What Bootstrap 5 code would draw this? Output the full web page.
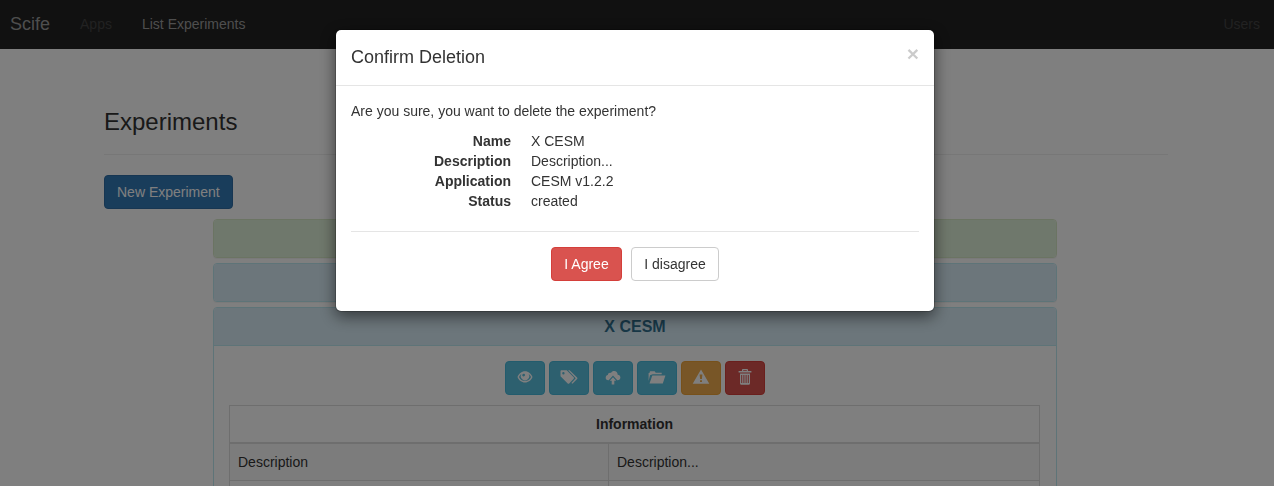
<!DOCTYPE html>
<html lang="en">
<head>
<meta charset="utf-8">
<title>Scife - Experiments</title>
<link rel="stylesheet" href="https://cdn.jsdelivr.net/npm/bootstrap@5.3.0/dist/css/bootstrap.min.css">
<script src="https://cdn.jsdelivr.net/npm/bootstrap@5.3.0/dist/js/bootstrap.bundle.min.js"></script>
<style>
body{font-family:"Liberation Sans",Arial,sans-serif;font-size:14px;line-height:20px;color:#333;overflow:hidden;height:486px}
.topbar{height:49px;background:#222;padding:0 14px 2px 10px}
.topbar .navbar-brand{font-size:18px;line-height:20px;color:#9d9d9d;margin-right:30px;padding:0}
.topbar .nav-link{color:#9d9d9d;padding:0;margin-right:30px}
.topbar .nav-link.disabled{color:#444}
.page-area{width:1064px;height:437px;overflow:hidden;margin-left:104px;padding-top:60px}
h3{font-size:24px;line-height:26px;font-weight:400;margin:0;color:inherit}
.rule{border-top:1px solid #eee;margin:19px 0 20px}
.btn{--bs-btn-font-size:14px;--bs-btn-line-height:20px;--bs-btn-padding-y:6px;--bs-btn-padding-x:12px;--bs-btn-border-radius:4px}
.btn-primary{--bs-btn-bg:#337ab7;--bs-btn-border-color:#2e6da4}
.btn-info{--bs-btn-bg:#5bc0de;--bs-btn-border-color:#46b8da}
.btn-warning{--bs-btn-bg:#f0ad4e;--bs-btn-border-color:#eea236}
.btn-danger{--bs-btn-bg:#d9534f;--bs-btn-border-color:#d43f3a}
.btn-default{--bs-btn-bg:#fff;--bs-btn-border-color:#ccc;--bs-btn-color:#333}
.panels{width:844px;margin:10px 0 0 109px;gap:5px}
.panels .card{border-radius:4px;border-color:#bce8f1;box-shadow:0 1px 1px rgba(0,0,0,.05);color:inherit}
.panels .card.done{border-color:#d6e9c6}
.panels .card-header{height:37px;padding:0;line-height:37px;font-size:16px;font-weight:700;text-align:center;background:#d9edf7;color:#31708f;border:0;border-radius:3px}
.panels .done .card-header{background:#dff0d8}
.panels .opened .card-header{height:38px;border-bottom:1px solid #bce8f1;border-radius:3px 3px 0 0}
.panels .card-body{padding:15px 16px 15px 15px}
.tools{gap:4px;margin-bottom:10px;padding-left:1px}
.tools .btn{width:40px;height:34px;padding:0 0 2px;display:flex;align-items:center;justify-content:center}
.tools svg{width:16px;height:16px;fill:#fff;display:block}
.tools svg.wide{width:18px}
.info-table{--bs-table-color:#333;border-color:#ddd;margin:0;table-layout:fixed;border-collapse:collapse}
.info-table>*>*>*{padding:8px;border:1px solid #ddd;line-height:20px}
.info-table .shaded{--bs-table-bg:#f9f9f9}
.info-table .wide-col{width:379px}
.info-table>thead>tr>th{border-bottom-width:2px;text-align:center}
.modal-backdrop{--bs-backdrop-opacity:.5}
.confirm{width:600px;max-width:600px;margin:29px 0 0 335px}
.confirm .modal-content{border:1px solid rgba(0,0,0,.2);border-radius:6px;background-clip:padding-box;box-shadow:0 5px 15px rgba(0,0,0,.5);color:#333}
.confirm .modal-header{height:56px;padding:0 15px;border-bottom:1px solid #e5e5e5}
.confirm .modal-title{font-size:18px;line-height:26px;font-weight:400;padding-bottom:1px}
.dismiss{border:0;background:none;padding:0;font-size:21px;line-height:21px;font-weight:700;color:#000;opacity:.2;text-shadow:0 1px 0 #fff;margin-bottom:9px}
.confirm .modal-body{padding:15px;height:225px}
.confirm p{margin:0 0 10px}
.confirm dl{display:grid;grid-template-columns:160px 1fr;column-gap:20px;margin:0 0 20px}
.confirm dt{text-align:right}.confirm dd{margin:0}
.choices{border-top:1px solid #e5e5e5;padding-top:15px;gap:9px}
.choices .btn{padding-left:0;padding-right:0}
.choices .btn-danger{width:71px}
.choices .btn-default{width:88px}
</style>
</head>
<body class="modal-open">
<nav class="topbar d-flex align-items-center">
  <a class="navbar-brand" href="#">Scife</a>
  <a class="nav-link disabled" href="#">Apps</a>
  <a class="nav-link" href="#">List Experiments</a>
  <a class="nav-link disabled ms-auto me-0" href="#">Users</a>
</nav>
<main class="page-area">
  <h3>Experiments</h3>
  <div class="rule"></div>
  <a class="btn btn-primary d-inline-block align-top" href="#">New Experiment</a>
  <div class="panels d-flex flex-column">
    <div class="card done"><div class="card-header"></div></div>
    <div class="card"><div class="card-header"></div></div>
    <div class="card opened">
      <div class="card-header">X CESM</div>
      <div class="card-body">
        <div class="tools d-flex justify-content-center">
          <button class="btn btn-info" aria-label="View"><svg viewBox="0 0 16 16"><path fill-rule="evenodd" d="M8 2.200C4.500 2.200 1.800 4.700.5 8c1.300 3.200 4 5.500 7.500 5.500s6.200-2.300 7.500-5.500C14.200 4.700 11.500 2.200 8 2.200zM2 8c.5-1.300 1.300-2.400 2.500-3.200a4.200 4.200 0 1 0 7 0C12.700 5.600 13.500 6.700 14 8c-1.100 2.500-3.300 4.100-6 4.100S3.100 10.500 2 8zM6.500 4.800c1 0 1.500.5 1.500 1.300S7.400 7.300 6.600 7.400 5.500 7 5.200 6.300c.1-.7.600-1.200 1.300-1.500z"/></svg></button>
          <button class="btn btn-info" aria-label="Tags"><svg class="wide" viewBox="0 0 18 16"><path fill-rule="evenodd" d="M.5 2.200c0-.6.4-1 1-1h5.200l7 7c.5.500.5 1 0 1.500l-4.500 4.700c-.5.500-1 .5-1.500 0L.5 7.300zM3.400 3a1.200 1.200 0 1 0 0 2.400 1.200 1.200 0 0 0 0-2.400z"/><path d="M8.100 1.200h1.500l7.500 7.200c.5.500.5 1 0 1.500l-4.700 4.900-1-.9 4.300-4.700z"/></svg></button>
          <button class="btn btn-info" aria-label="Upload"><svg viewBox="0 0 16 16"><path d="M3.300 11.200A2.600 2.600 0 0 1 .7 8.500c0-1.400.9-2.400 2.200-2.600C2.900 4 4.700 3.200 6 3.900c.7-1.300 1.800-1.800 3.100-1.800 2.100 0 3.600 1.600 3.600 3.600 1.600.1 2.700 1.200 2.700 2.700 0 1.600-1.200 2.800-2.800 2.800h-.3L8 6.500l-4.300 4.700z"/><path d="M8 8.200l3.200 3.600H9.300v3.700H6.700v-3.700H4.800z"/></svg></button>
          <button class="btn btn-info" aria-label="Files"><svg class="wide" viewBox="0 0 18 16"><path d="M.6 12V4h1V3l.6-.7h4.500l1 1.400h6v1.500H4.700L2 6.300z"/><path d="M4.300 6.500h13.100l-2.600 7.900H1.500z"/></svg></button>
          <button class="btn btn-warning" aria-label="Warning"><svg class="wide" viewBox="0 0 18 16"><path fill-rule="evenodd" d="M9 .6l8.300 14.200H.7zM7.600 5.500l.5 4.500h1.800l.5-4.500zM8 11.200v1.800h2v-1.800z"/></svg></button>
          <button class="btn btn-danger" aria-label="Delete"><svg viewBox="0 0 16 16"><path fill-rule="evenodd" d="M5 2V.9c0-.5.3-.9.8-.9h4.400c.5 0 .8.4.8.9V2h3.400v1.500H1.600V2zm1.200 0h3.600v-.8H6.200zM3 4.500h10v9.700c0 .8-.5 1.500-1.400 1.500H4.400C3.500 15.700 3 15 3 14.200zM4.200 6v8h1V6zm2.200 0v8h1V6zm2.200 0v8h1V6zm2.200 0v8h1V6z"/></svg></button>
        </div>
        <table class="table info-table">
          <colgroup><col class="wide-col"><col></colgroup>
          <thead><tr><th colspan="2">Information</th></tr></thead>
          <tbody>
            <tr class="shaded"><td>Description</td><td>Description...</td></tr>
            <tr><td></td><td></td></tr>
          </tbody>
        </table>
      </div>
    </div>
  </div>
</main>
<div class="modal-backdrop show"></div>
<div class="modal show d-block overflow-hidden" tabindex="-1">
  <div class="modal-dialog confirm">
    <div class="modal-content">
      <div class="modal-header">
        <h4 class="modal-title">Confirm Deletion</h4>
        <button class="dismiss ms-auto" aria-label="Close">×</button>
      </div>
      <div class="modal-body">
        <p>Are you sure, you want to delete the experiment?</p>
        <dl>
          <dt>Name</dt><dd>X CESM</dd>
          <dt>Description</dt><dd>Description...</dd>
          <dt>Application</dt><dd>CESM v1.2.2</dd>
          <dt>Status</dt><dd>created</dd>
        </dl>
        <div class="choices d-flex justify-content-center">
          <button class="btn btn-danger text-white">I Agree</button>
          <button class="btn btn-default">I disagree</button>
        </div>
      </div>
    </div>
  </div>
</div>
</body>
</html>
